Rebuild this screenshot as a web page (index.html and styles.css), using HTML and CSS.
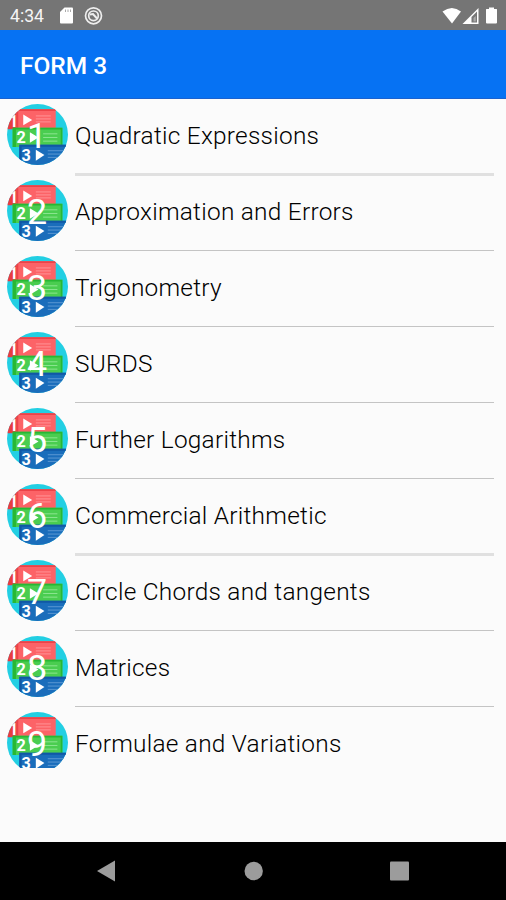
FILE: index.html
```
<!DOCTYPE html>
<html lang="en">
<head>
<meta charset="utf-8">
<title>FORM 3</title>
<link rel="stylesheet" href="styles.css">
</head>
<body>
<svg class="defs" width="0" height="0" aria-hidden="true">
  <defs>
    <clipPath id="disc"><circle cx="113" cy="110" r="92"/></clipPath>
    <symbol id="cards" viewBox="21 18 184 184">
      <g clip-path="url(#disc)">
        <rect x="20" y="17" width="186" height="186" fill="#22cfe3"/>
        <path d="M20 54L52 40V94H20z" fill="#e83c40"/>
        <text class="card-number" x="27" y="86">1</text>
        <path d="M50 34H168V92H50z" fill="#fc6367"/>
        <path d="M50 34H168V39H55V92H50z" fill="#ec4348"/>
        <path d="M108 54H153M108 63H153M108 72H153" stroke="#ff9396" stroke-width="3"/>
        <path d="M70 50L97 66L70 82z" fill="#fff"/>
        <path d="M38 90H188V148H38z" fill="#4acd50"/>
        <path d="M38 90H188V95H48V148H38zM183 90H188V148H183z" fill="#27b834"/>
        <path d="M130 108H173M130 119H173M130 130H173" stroke="#8ce590" stroke-width="3"/>
        <path d="M90 103L116 119L90 135z" fill="#fff"/>
        <path d="M58 141H206V203H58z" fill="#1a6dbb"/>
        <path d="M58 141H206V147H65V203H58z" fill="#1158a5"/>
        <path d="M144 159H192M144 169H188M144 179H180" stroke="#5c98d2" stroke-width="3"/>
        <path d="M108 156L134 172L108 189z" fill="#fff"/>
        <g class="card-number">
          <text x="50" y="137">2</text>
          <text x="65" y="191">3</text>
        </g>
      </g>
    </symbol>
  </defs>
</svg>
<div class="screen">
  <header class="status">
    <span class="clock">4:34</span>
    <svg class="status-left" width="46" height="20" viewBox="0 0 46 20">
      <path d="M5.500 1.500H13Q14 1.500 14 2.500V16.500Q14 17.500 13 17.500H2Q1 17.500 1 16.500V6z" fill="#fff"/>
      <path d="M6.500 3.500V6M9 3.500V6M11.500 3.500V6" stroke="#aaa" stroke-width="1"/>
      <circle cx="34.500" cy="9.800" r="8" fill="none" stroke="#eee" stroke-width="1.700"/>
      <circle cx="34.500" cy="9.800" r="4.800" fill="none" stroke="#eee" stroke-width="1.700"/>
      <path d="M31 8.500L34 8L38 12.500" fill="none" stroke="#eee" stroke-width="2"/>
    </svg>
    <svg class="status-right" width="58" height="20" viewBox="0 0 58 20">
      <path d="M1.500 5.500Q11 -1.500 20 5.500L11 17.500z" fill="#fff"/>
      <path d="M21.500 18L37.500 2V18z" fill="#fff"/>
      <path d="M30.500 11L36 5.500V16.500H30.500z" fill="#777"/>
      <path d="M32.500 12L34.800 10V15.500H32.500z" fill="#aaa"/>
      <path d="M48 1.500H53V3H55.500Q56 3 56 3.500V16.500Q56 17.500 55 17.500H46Q45 17.500 45 16.500V3.500Q45 3 45.500 3H48z" fill="#fff"/>
    </svg>
  </header>
  <div class="appbar"><h1>FORM 3</h1></div>
  <main>
    <ul class="topics">
      <li><svg class="badge" viewBox="21 18 184 184"><use href="#cards" x="21" y="18" width="184" height="184"/><text x="112" y="151">1</text></svg><span class="name soft">Quadratic Expressions</span></li>
      <li><svg class="badge" viewBox="21 18 184 184"><use href="#cards" x="21" y="18" width="184" height="184"/><text x="112" y="151">2</text></svg><span class="name">Approximation and Errors</span></li>
      <li><svg class="badge" viewBox="21 18 184 184"><use href="#cards" x="21" y="18" width="184" height="184"/><text x="112" y="151">3</text></svg><span class="name">Trigonometry</span></li>
      <li><svg class="badge" viewBox="21 18 184 184"><use href="#cards" x="21" y="18" width="184" height="184"/><text x="112" y="151">4</text></svg><span class="name">SURDS</span></li>
      <li><svg class="badge" viewBox="21 18 184 184"><use href="#cards" x="21" y="18" width="184" height="184"/><text x="112" y="151">5</text></svg><span class="name">Further Logarithms</span></li>
      <li><svg class="badge" viewBox="21 18 184 184"><use href="#cards" x="21" y="18" width="184" height="184"/><text x="112" y="151">6</text></svg><span class="name soft">Commercial Arithmetic</span></li>
      <li><svg class="badge" viewBox="21 18 184 184"><use href="#cards" x="21" y="18" width="184" height="184"/><text x="112" y="151">7</text></svg><span class="name">Circle Chords and tangents</span></li>
      <li><svg class="badge" viewBox="21 18 184 184"><use href="#cards" x="21" y="18" width="184" height="184"/><text x="112" y="151">8</text></svg><span class="name">Matrices</span></li>
      <li><svg class="badge" viewBox="21 18 184 184"><use href="#cards" x="21" y="18" width="184" height="184"/><text x="112" y="151">9</text></svg><span class="name last">Formulae and Variations</span></li>
    </ul>
  </main>
  <nav class="navbar">
    <svg width="506" height="58" viewBox="0 0 506 58" fill="#9c9c9c">
      <path d="M97 29L115 18.500V39.500z"/>
      <circle cx="253.700" cy="29" r="9.200"/>
      <rect x="390" y="19.500" width="19" height="19" rx="1"/>
    </svg>
  </nav>
</div>
</body>
</html>
```
FILE: styles.css
```
* { box-sizing: border-box; }
body {
  margin: 0;
  font-family: Roboto, sans-serif;
  background: #fbfbfb;
}
.defs { display: block; }
.screen {
  width: 506px;
  height: 900px;
  display: flex;
  flex-direction: column;
  overflow: hidden;
}
.status {
  height: 30px;
  flex: none;
  display: flex;
  align-items: center;
  padding: 1px 7px 0 10px;
  background: #757575;
  color: #f4f4f4;
}
.clock { width: 49px; font-size: 17.6px; }
.status-right { margin-left: auto; }
.appbar {
  height: 69px;
  flex: none;
  display: flex;
  align-items: center;
  padding: 2px 20px 0;
  background: #0672f3;
  border-bottom: 1px solid #1a62cf;
}
h1 {
  margin: 0;
  color: #fff;
  font-size: 24.5px;
  font-weight: 500;
}
main { flex: 1; }
.topics {
  list-style: none;
  margin: 0;
  padding: 0;
  height: 669px;
  overflow: hidden;
}
.topics li {
  height: 75.95px;
  display: flex;
  align-items: stretch;
  padding: 5px 12px 0 7px;
}
.badge {
  width: 61px;
  height: 61px;
  flex: none;
  margin-right: 7px;
}
.badge > text {
  fill: #fff;
  font-size: 108px;
  text-anchor: middle;
}
.card-number {
  fill: #fff;
  font-size: 49px;
  font-weight: 700;
}
.name {
  flex: 1;
  border-bottom: 1.5px solid #c4c4c4;
  color: #000;
  font-size: 24.4px;
  font-weight: 300;
  line-height: 64px;
  letter-spacing: 0.26px;
}
.soft {
  border-bottom: 3px solid #e0e0e0;
  margin-bottom: -1px;
}
.last { border-bottom: 0; }
.navbar {
  height: 58px;
  flex: none;
  background: #000;
}
.navbar svg { display: block; }
```
